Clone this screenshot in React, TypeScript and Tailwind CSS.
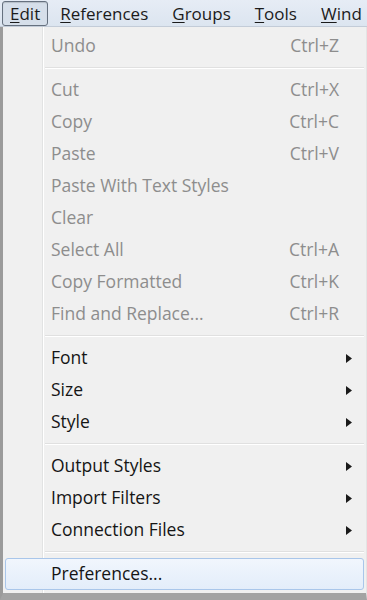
import { Fragment } from "react"

type Item =
  | { sep: true }
  | { label: string; shortcut?: string; disabled?: boolean; sub?: boolean; active?: boolean; sep?: false }

const items: Item[] = [
  { label: "Undo", shortcut: "Ctrl+Z", disabled: true },
  { sep: true },
  { label: "Cut", shortcut: "Ctrl+X", disabled: true },
  { label: "Copy", shortcut: "Ctrl+C", disabled: true },
  { label: "Paste", shortcut: "Ctrl+V", disabled: true },
  { label: "Paste With Text Styles", disabled: true },
  { label: "Clear", disabled: true },
  { label: "Select All", shortcut: "Ctrl+A", disabled: true },
  { label: "Copy Formatted", shortcut: "Ctrl+K", disabled: true },
  { label: "Find and Replace...", shortcut: "Ctrl+R", disabled: true },
  { sep: true },
  { label: "Font", sub: true },
  { label: "Size", sub: true },
  { label: "Style", sub: true },
  { sep: true },
  { label: "Output Styles", sub: true },
  { label: "Import Filters", sub: true },
  { label: "Connection Files", sub: true },
  { sep: true },
  { label: "Preferences...", active: true },
]

function MenuTitle({ first, rest, pressed }: { first: string; rest: string; pressed?: boolean }) {
  return (
    <div
      className={
        pressed
          ? "h-[25px] ml-[2px] pl-[7px] pr-[7px] flex items-center rounded-[3px] border border-[#66717f] bg-[#d6dfea] shadow-[inset_0_1px_1px_rgba(0,0,0,0.15)]"
          : "h-[25px] px-[12px] flex items-center"
      }
    >
      <span>
        <span className="underline underline-offset-2 decoration-1">{first}</span>
        {rest}
      </span>
    </div>
  )
}

function Arrow() {
  return (
    <svg width="6" height="9" viewBox="0 0 6 9" className="block">
      <path d="M0 0 L6 4.5 L0 9 Z" fill="#1a1a1a" />
    </svg>
  )
}

export default function App() {
  return (
    <div className="w-[367px] h-[600px] overflow-hidden bg-[#f0f0f0] text-[17.5px] font-['Open_Sans',sans-serif] leading-none">
      {/* menu bar */}
      <div className="h-[27px] flex items-start pt-[1px] text-[17px] text-[#1b1b1b] bg-[linear-gradient(to_bottom,#e6ecf5,#dce5f0)] border-b border-[#c3ccd8] whitespace-nowrap overflow-hidden">
        <MenuTitle first="E" rest="dit" pressed />
        <MenuTitle first="R" rest="eferences" />
        <MenuTitle first="G" rest="roups" />
        <MenuTitle first="T" rest="ools" />
        <MenuTitle first="W" rest="ind" />
      </div>

      {/* dropdown */}
      <div className="h-[573px] border-l-[3px] border-l-[#9b9b9b] border-r border-r-[#e4e4e4] border-b-[7px] border-b-[#a3a3a3] pt-[3px] pr-[2px] bg-[linear-gradient(to_right,#f0f0f0_39px,#e2e3e3_39px,#e2e3e3_40px,#ffffff_40px,#ffffff_41px,#f0f0f0_41px)]">
        {items.map((it, i) =>
          it.sep ? (
            <div key={i} className="h-[12px] pl-[42px] flex flex-col justify-center">
              <div className="h-px bg-[#e0e0e0]" />
              <div className="h-px bg-white" />
            </div>
          ) : (
            <Fragment key={i}>
              <div
                className={
                  it.active
                    ? "h-[32px] flex items-center ml-[2px] pl-[45px] rounded-[3px] border border-[#a9c6ea] bg-[linear-gradient(to_bottom,#f1f6fd,#e3edfa)]"
                    : "h-[32px] flex items-center pl-[48px]"
                }
              >
                <span className={it.disabled ? "text-[#8d8d8d] flex-1" : "text-[#151515] flex-1"}>{it.label}</span>
                {it.shortcut && <span className="text-[#8d8d8d] pr-[25px]">{it.shortcut}</span>}
                {it.sub && (
                  <span className="pr-[12px]">
                    <Arrow />
                  </span>
                )}
              </div>
            </Fragment>
          )
        )}
      </div>
    </div>
  )
}
